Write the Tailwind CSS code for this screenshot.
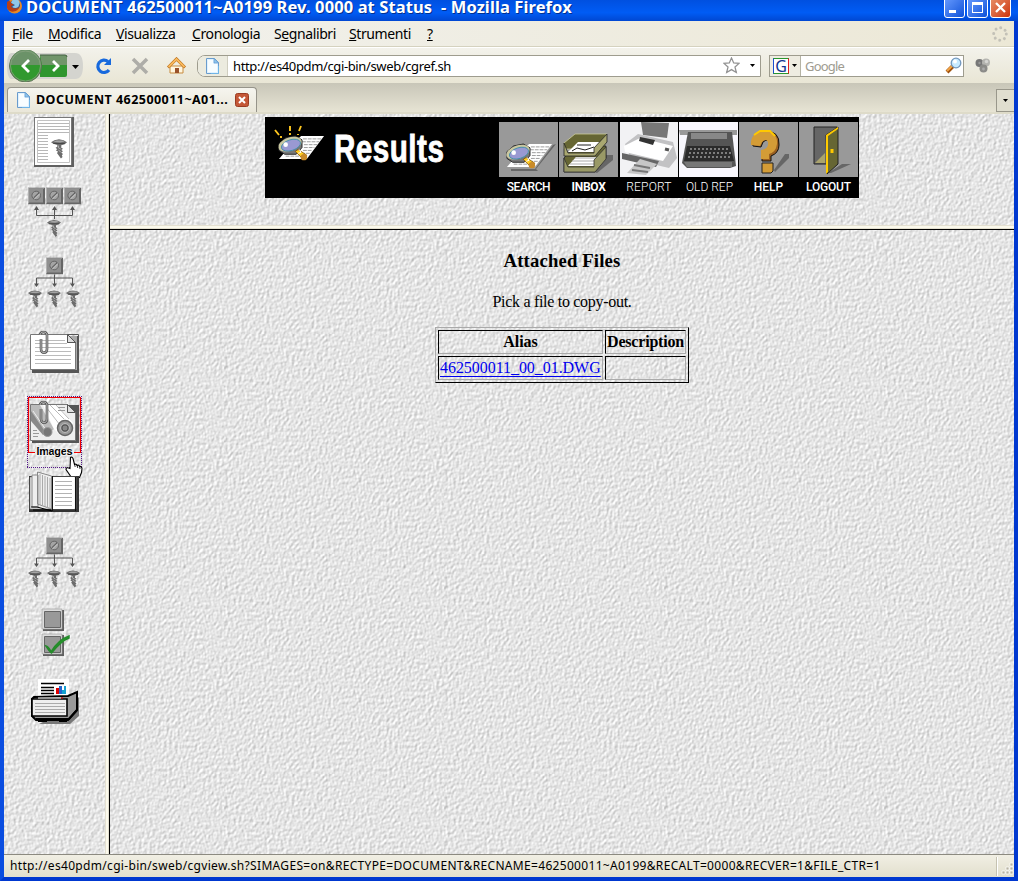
<!DOCTYPE html>
<html lang="it">
<head>
<meta charset="utf-8">
<title>DOCUMENT 462500011~A0199 Rev. 0000 at Status - Mozilla Firefox</title>
<script src="https://cdn.jsdelivr.net/npm/@tailwindcss/browser@4"></script>
</head>
<body class="w-[1018px] h-[881px] overflow-hidden font-['Noto_Sans',sans-serif]">
<!-- shared symbols -->
<svg class="absolute w-0 h-0">
  <defs>
    <filter id="paper" x="0" y="0" width="100%" height="100%" color-interpolation-filters="sRGB">
      <feTurbulence type="fractalNoise" baseFrequency="0.36 0.3" numOctaves="2" seed="8" stitchTiles="stitch" result="n"/>
      <feDiffuseLighting in="n" surfaceScale="0.42" diffuseConstant="1.17" lighting-color="#fff">
        <feDistantLight azimuth="220" elevation="50"/>
      </feDiffuseLighting>
    </filter>
    <pattern id="tex" width="220" height="220" patternUnits="userSpaceOnUse"><rect width="220" height="220" filter="url(#paper)"/></pattern>
    <symbol id="screw" viewBox="0 0 14 17" overflow="visible">
      <path d="M0 2.500 3 .8 7 0l4 .8 3 1.700-2 1.800-3 1v2l1.500 1-1.500 1 1.500 1.200-1.500 1 1.500 1.400-1 1 .6 1.600-1.400 1.400L5.200 12l1-1-2-1.300 1.300-1-1.500-1.200 1.500-1V5L2 4Z" fill="#6c6c6c"/>
      <path d="M2 2.200 5 1h5l2 1-4 .8Z" fill="#a4a4a4"/><path d="M6.500 5.500v2l2 1M6.500 9.500l2 1.500" stroke="#bbb" stroke-width=".8" fill="none"/>
      <path d="M2 3.700h10" stroke="#444" stroke-width=".8"/>
    </symbol>
    <symbol id="plate" viewBox="0 0 17 17">
      <path d="M0 0h17v17H0z" fill="#666"/><path d="M0 0h16v1H1v15H0z" fill="#b0b0b0"/><path d="M1 1h14v14H1z" fill="#909090"/>
      <circle cx="8.200" cy="8" r="4.300" fill="#a4a4a4" stroke="#666"/><path d="M5.500 10.500 11 5.200" stroke="#444" stroke-width="1"/><path d="M6.500 11.500 12 6.200" stroke="#ccc" stroke-width=".8"/>
    </symbol>
    <symbol id="tree" viewBox="0 0 52 52" overflow="visible">
      <use href="#plate" x="18" y="0" width="17" height="17"/>
      <path d="M26.500 17v11M8.500 28v-7.500h36v7.500" fill="none" stroke="#555"/>
      <path d="M6 26h5l-2.500 3.500ZM24 26h5l-2.500 3.500ZM42 26h5l-2.500 3.500Z" fill="#555"/>
      <use href="#screw" x="0" y="33" width="14" height="17"/><use href="#screw" x="19" y="33" width="14" height="17"/><use href="#screw" x="38" y="33" width="14" height="17"/>
    </symbol>
    <symbol id="clip" viewBox="0 0 10 25" overflow="visible">
      <path d="M1 4C1 0 8 0 8 4v14c0 5-6 5-6 0V8" fill="none" stroke="#555" stroke-width="2.600"/>
      <path d="M1 4C1 0 8 0 8 4v14c0 5-6 5-6 0V8" fill="none" stroke="#bbb" stroke-width="1"/>
    </symbol>
    <symbol id="page" viewBox="0 0 13 16">
      <path d="M.5.500h8l4 4v11H.5Z" fill="#e0f2ff" stroke="#6a9ccd"/><path d="M2 2h5v4h4v8H2Z" fill="#f8fdff"/><path d="M8 .500v4.500h4.500Z" fill="#8fc6ee" stroke="#5e99cf" stroke-width=".7"/><path d="M5 15.500h7.500V8" stroke="#70b5e6" fill="none"/>
    </symbol>
    <symbol id="lens" viewBox="0 0 50 30" overflow="visible">
      <path d="M24 2h24L30 26H1l6-7Z" fill="#fff"/>
      <path d="M26 5h19M25 8h18M27 11h14M27 14h11M26 17h10M24 20h10M8 23h20" stroke="#999" stroke-dasharray="4 1"/>
      <path d="M1 15v-5L8 4l10-2 7 4v8l-6 7H7l-6-4Z" fill="#777" stroke="#222"/>
      <ellipse cx="12.500" cy="10.500" rx="12.500" ry="7" fill="#c9c7a0" transform="rotate(-18 12.500 10.500)"/>
      <ellipse cx="13.500" cy="11.500" rx="10.300" ry="5.600" fill="#9999d2" stroke="#358ba8" stroke-width=".8" transform="rotate(-18 13.500 11.500)"/>
      <circle cx="8" cy="11" r="2.400" fill="#fff"/>
      <path d="m18 18 3-2 9 6-3 5Z" fill="#ffcc22" stroke="#7c4a00" stroke-width=".8"/><circle cx="27" cy="24" r="3.300" fill="#c98b2a"/><path d="m22 16 2 3-3 1" stroke="#fff" fill="none"/>
    </symbol>
  </defs>
</svg>

<div class="flex h-full flex-col bg-[#ece9d8]">
  <!-- title bar -->
  <header class="flex h-[21px] shrink-0 items-start justify-between overflow-hidden bg-linear-to-b from-[#0050e0] via-[#005cf5] via-60% to-[#0047d2] pl-[6px] pr-[7px]">
    <div class="flex h-full items-start">
      <svg class="mt-[-1px] h-[16px] w-[17px]" viewBox="0 0 17 16"><circle cx="8.500" cy="7" r="7.500" fill="#e88a24"/><circle cx="9" cy="6" r="5" fill="#21599d"/><path d="M7 0c4-1 8 2 6 6 0 3-4 4-7 2l3-2-4-2Z" fill="#8fc8ea"/><path d="M1 3c2-2 4-1 4 1l3 2-3 1c1 3 6 3 8 1-1 5-9 7-12 1Z" fill="#b73e17"/></svg>
      <h1 class="ml-[3px] mt-[-4px] whitespace-pre text-[16.500px] font-bold leading-[22px] tracking-[0.1px] text-white [text-shadow:1px_1px_0_#003090]">DOCUMENT 462500011~A0199 Rev. 0000 at Status  - Mozilla Firefox</h1>
    </div>
    <div class="mt-[-4px] flex gap-[2px]">
      <div class="h-[22px] w-[21px] rounded-[3px] border border-white bg-linear-to-br from-[#699cff] to-[#0850d8] pl-[4px] pt-[13px]"><div class="h-[3px] w-[7px] bg-white"></div></div>
      <div class="h-[22px] w-[21px] rounded-[3px] border border-white bg-linear-to-br from-[#699cff] to-[#0850d8] pl-[4px] pt-[5px]"><div class="h-[11px] w-[11px] border border-t-[3px] border-white"></div></div>
      <div class="h-[22px] w-[21px] rounded-[3px] border border-white bg-linear-to-br from-[#e79069] to-[#cc3000]"><svg viewBox="0 0 19 20"><path d="m5 6 9 9m0-9-9 9" stroke="#fff" stroke-width="2.300"/></svg></div>
    </div>
  </header>

  <div class="flex min-h-0 flex-1 flex-col border-x-4 border-b-4 border-[#0a4de0] border-b-[#0038d0] border-r-[#0038d0]">
    <!-- menu bar -->
    <nav class="flex h-[26px] shrink-0 items-center justify-between border-b border-[#d5d2bf] bg-linear-to-r from-[#f2f2ef] to-[#ece8d6] pl-[8px] pr-[6px]">
      <ul class="flex gap-[16px] text-[14px] leading-[20px] tracking-[-0.4px] text-black">
        <li class="w-[20px]"><u>F</u>ile</li><li class="w-[52px]"><u>M</u>odifica</li><li class="w-[60px]"><u>V</u>isualizza</li><li class="w-[66px]"><u>C</u>ronologia</li><li class="w-[59px]">S<u>e</u>gnalibri</li><li class="w-[62px]"><u>S</u>trumenti</li><li><u>?</u></li>
      </ul>
      <svg class="h-[16px] w-[16px]" viewBox="0 0 16 16"><circle cx="8" cy="8" r="6.300" fill="none" stroke="#c3c1b7" stroke-width="3" stroke-linecap="round" stroke-dasharray="0.010 4.938"/></svg>
    </nav>

    <!-- navigation bar -->
    <div class="flex h-[36px] shrink-0 items-center border-t border-white bg-linear-to-b from-[#f3f2eb] to-[#e9e6d5] pl-[3px]">
      <svg class="h-[32px] w-[76px]" viewBox="7 50 76 32">
        <path d="M11 53h64q8 0 8 13t-8 13H11Q7 78 7 66t4-13Z" fill="#d4d4cf"/>
        <path d="M40 55h25q2 0 2 2v18q0 2-2 2H40Z" fill="#2f962f"/><path d="M40 55h25q2 0 2 2v8H42Z" fill="#71956a"/><path d="M40 55h25q2 0 2 2" stroke="#456043" fill="none"/>
        <circle cx="25.500" cy="66" r="16" fill="#31992f" stroke="#64705c"/><path d="M10 65a15.500 15.500 0 0 1 31 0Z" fill="#6b9268"/><circle cx="25.500" cy="66" r="15" fill="none" stroke="#8aa582" stroke-width=".8"/>
        <path d="m29 60-6 6 6 6M53 61l5 5-5 5" fill="none" stroke="#fff" stroke-width="2.800"/><path d="M72 65h7l-3.500 4Z" fill="#000"/>
      </svg>
      <svg class="ml-[12px] h-[18px] w-[17px]" viewBox="0 0 17 18"><path d="M13 4.500A6.200 6.200 0 1 0 14 13" fill="none" stroke="#1769dd" stroke-width="3.200"/><path d="M16 1v7H9Z" fill="#1769dd"/></svg>
      <svg class="ml-[19px] h-[18px] w-[18px]" viewBox="0 0 18 18"><path d="m2 2 14 14M16 2 2 16" stroke="#aeada8" stroke-width="3.500"/></svg>
      <svg class="ml-[18px] h-[18px] w-[19px]" viewBox="0 0 19 18"><path d="M3 9h13v7H3Z" fill="#fff6df" stroke="#c78b3e"/><path d="M1 10.500 9.500 2l8.500 8.500" fill="none" stroke="#b96e1a" stroke-width="3"/><path d="M1.500 10 9.500 2l8 8" fill="none" stroke="#f9b95c" stroke-width="1.800"/><path d="M8 11h4v5H8Z" fill="#9a522a"/></svg>
      <div class="ml-[11px] flex h-[22px] w-[564px] items-center rounded-l-[8px] border border-[#9e9c8e] bg-white">
        <div class="flex h-full w-[30px] items-center justify-center rounded-l-[7px] border-r border-[#d0cec0] bg-[#ecebdf]"><svg class="h-[16px] w-[13px]"><use href="#page"/></svg></div>
        <span class="ml-[5px] flex-1 text-[13px] leading-[18px] tracking-[-0.37px]">http://es40pdm/cgi-bin/sweb/cgref.sh</span>
        <svg class="h-[17px] w-[17px]" viewBox="0 0 17 17"><path d="m8.500 1 2.200 5 5.300.4-4 3.600 1.300 5.500-4.800-2.900-4.800 2.900L5 10 1 6.400 6.300 6Z" fill="#fff" stroke="#929292" stroke-width="1.300"/></svg>
        <svg class="ml-[10px] mr-[5px] h-[3px] w-[5px]" viewBox="0 0 5 3"><path d="M0 0h5L2.500 3Z"/></svg>
      </div>
      <div class="ml-[8px] flex h-[22px] w-[195px] items-center border border-[#9e9c8e] bg-white">
        <div class="flex h-full w-[31px] items-center gap-[3px] border-r border-[#b5b3a4] bg-[#eeece1] pl-[3px]">
          <div class="flex h-[16px] w-[16px] items-center justify-center border border-b-[#28962e] border-l-[#1c4ed0] border-r-[#e02020] border-t-[#28962e] bg-white text-[16px] leading-none text-[#123590]">G</div>
          <svg class="h-[3px] w-[5px]" viewBox="0 0 5 3"><path d="M0 0h5L2.500 3Z"/></svg>
        </div>
        <span class="ml-[4px] flex-1 text-[13px] leading-[18px] tracking-[-0.8px] text-[#9e9b90]">Google</span>
        <svg class="mr-[1px] h-[17px] w-[17px]" viewBox="0 0 17 17"><path d="m8 9-6 6" stroke="#9d4f0b" stroke-width="4"/><path d="m8 8-6 6" stroke="#f2a447" stroke-width="2"/><circle cx="11" cy="6" r="4.800" fill="#c7eaff" stroke="#7397bd" stroke-width="1.300"/><circle cx="10" cy="4.500" r="2" fill="#fff"/></svg>
      </div>
      <svg class="ml-[11px] h-[15px] w-[16px]" viewBox="0 0 16 15"><circle cx="4.500" cy="5" r="4" fill="#777"/><circle cx="11" cy="4.500" r="4" fill="#b4b4b0"/><circle cx="8.500" cy="10.500" r="4" fill="#8b8b88"/><circle cx="4.500" cy="5" r="1.200" fill="#999"/><circle cx="11.500" cy="3.500" r="1.700" fill="#d5d5d2"/><circle cx="8.500" cy="11" r="1.400" fill="#aaa"/></svg>
    </div>

    <!-- tab strip -->
    <div class="flex h-[31px] shrink-0 items-end justify-between border-b-2 border-[#dedbc9] bg-linear-to-b from-[#c8c6b8] to-[#e7e4d4]">
      <div class="ml-[3px] flex h-[25px] w-[250px] items-center rounded-t-[4px] border border-b-0 border-[#96948a] bg-linear-to-b from-[#f6f5ef] to-[#eae7d9] pl-[9px]">
        <svg class="h-[16px] w-[13px]"><use href="#page"/></svg>
        <span class="ml-[6px] w-[199px] whitespace-nowrap text-[12.500px] font-bold leading-[18px] tracking-[0.45px]">DOCUMENT 462500011~A01...</span>
        <svg class="h-[14px] w-[14px] shrink-0" viewBox="0 0 14 14"><rect x=".5" y=".5" width="13" height="13" rx="2" fill="#c45736" stroke="#9a3c23"/><path d="m4 4 6 6m0-6-6 6" stroke="#fff" stroke-width="2"/></svg>
      </div>
      <div class="flex h-[23px] w-[18px] items-center justify-center self-end border border-r-0 border-[#99978b] bg-[#e0decf]"><svg class="h-[3px] w-[5px]" viewBox="0 0 5 3"><path d="M0 0h5L2.500 3Z"/></svg></div>
    </div>

    <!-- frameset -->
    <main class="relative isolate flex min-h-0 flex-1">
      <svg class="absolute inset-0 -z-10 h-full w-full"><rect width="100%" height="100%" fill="url(#tex)"/></svg>
      <aside class="flex w-[101px] shrink-0 flex-col">
        <svg class="h-[69px] w-[100px] shrink-0" viewBox="4 114 100 69">
          <path d="M34 117h40v50H34z" fill="#606060"/><path d="M34 117h38v48H34z" fill="#777"/><path d="M35 118h36v47H35z" fill="#fff"/>
          <path d="M37.500 120.500h32v42h-32z" fill="none" stroke="#c3c3c3"/><path d="M38 123.500h31M38 126.500h31M38 129.500h31M38 132.500h31M38 135.500h10M38 138.500h10M38 141.500h10M38 144.500h10M38 147.500h10M38 150.500h10M38 153.500h10M38 156.500h10M38 159.500h10" stroke="#b8b8b8"/>
          <use href="#screw" x="51" y="139" width="16" height="20"/>
        </svg>
        <svg class="h-[70px] w-[100px] shrink-0" viewBox="4 183 100 70">
          <use href="#plate" x="28" y="187.500" width="17" height="17"/><use href="#plate" x="46" y="187.500" width="17" height="17"/><use href="#plate" x="64" y="187.500" width="17" height="17"/>
          <path d="M36.500 208v7.500h36V208M54.500 208v11" fill="none" stroke="#555"/><path d="M34 210h5l-2.500-4ZM52 210h5l-2.500-4ZM70 210h5l-2.500-4Z" fill="#555"/>
          <use href="#screw" x="47" y="220" width="14" height="17"/>
        </svg>
        <svg class="h-[70px] w-[100px] shrink-0" viewBox="4 253 100 70"><use href="#tree" x="28" y="257.500" width="52" height="52"/></svg>
        <svg class="h-[70px] w-[100px] shrink-0" viewBox="4 323 100 70">
          <path d="M32 336h47v37H32z" fill="#555"/><path d="M33 336h44v34H33z" fill="#aaa"/><path d="M30.500 334.500h37l8 8v27h-45z" fill="#fff" stroke="#777"/><path d="M67.500 334.500v8h8M67.500 334.500h11v2" fill="none" stroke="#555"/><path d="m67.500 334.500 8 8h-8Z" fill="#ddd" stroke="#555"/>
          <path d="M35 340.500h30M35 343.500h32M35 347.500h36M35 351.500h36M35 355.500h36M35 359.500h36M35 363.500h36" stroke="#bbb"/>
          <use href="#clip" x="39" y="331" width="10" height="25"/>
        </svg>
        <svg class="h-[76px] w-[100px] shrink-0 overflow-visible" viewBox="4 393 100 76">
          <path d="M32 405h47v38H32z" fill="#555"/><path d="M30.500 404.500h37l8 8v28h-45z" fill="#eee" stroke="#777"/>
          <path d="M31 405h9l14 24-9 7-14-19Z" fill="#bbb"/><path d="m31 411 15 22-3 2-12-14Z" fill="#888"/><path d="M43 405h14l16 18-12 13-7-7Z" fill="#fff"/><path d="m50 405 14 14m-18-12 14 18m-4-20 13 14" stroke="#bbb"/><path d="m33 411 13 19" stroke="#eee"/>
          <circle cx="47.500" cy="432" r="4.500" fill="#777" stroke="#999"/><circle cx="65" cy="428" r="7.500" fill="#999" stroke="#666" stroke-width="1.500"/><circle cx="65" cy="428" r="4.500" fill="#777" stroke="#bbb" stroke-width="1"/><circle cx="65" cy="428" r="3" fill="#888" stroke="#555"/>
          <path d="M67.500 404.500v8h8l-8-8" fill="#ddd" stroke="#555"/><path d="M58 407.500h7M58 410.500h7M33 430.500h4M33 433.500h6M33 436.500h5" stroke="#999"/>
          <use href="#clip" x="39" y="401" width="10" height="25"/>
          <path d="M35 452.500h-6.500v-55h52v55h-6.500" fill="none" stroke="#f00000" stroke-width="1.200"/>
          <path d="M27.500 396v72M81.500 396v72M27 396.500h55M27 467.500h55" fill="none" stroke="#551a8b" stroke-dasharray="1 1" shape-rendering="crispEdges"/>
          <text x="54.500" y="455" text-anchor="middle" font-family="Liberation Sans,sans-serif" font-size="11" font-weight="700" textLength="36" stroke="#f2f2f2" stroke-width="2" paint-order="stroke">Images</text>
          <path d="M70.500 457.500q1.500-1 2.500 1l1.500 6q2-1 2.500 1 2-1 2.500 1 2-.5 2.500 2l-.5 4-2 5h-8l-5.500-8q0-3 4-1Z" fill="#fff" stroke="#000" stroke-width="1.100"/><path d="m74.500 464 .7 3m2-2 .5 3m2-2 .3 3" stroke="#000" stroke-width=".8"/>
        </svg>
        <svg class="h-[60px] w-[100px] shrink-0" viewBox="4 469 100 60">
          <path d="M29 476h50v36H29z" fill="#333"/><path d="M30 477h46v32H30z" fill="#eee" stroke="#777" stroke-width=".6"/><path d="M52.500 477h22v32h-22z" fill="#fff"/><path d="M52.500 476v35M75.500 477v34" stroke="#111"/>
          <path d="M55 481.500h17M55 485.500h17M55 489.500h17M55 493.500h17M55 497.500h17M55 501.500h17M55 505.500h17" stroke="#b3b3b3"/>
          <path d="M32 475h6v32h-6zM37.500 472l14 4v33l-14-5Z" fill="#eee" stroke="#888"/><path d="M40 474v31M42.500 475v31M45 476v31M47.500 477v31M50 478v31" stroke="#aaa"/><path d="M31 507h6l15 4M33 510h18" stroke="#000" fill="none"/>
        </svg>
        <svg class="h-[70px] w-[100px] shrink-0" viewBox="4 529 100 70"><use href="#tree" x="28" y="537.500" width="52" height="52"/></svg>
        <svg class="h-[70px] w-[100px] shrink-0" viewBox="4 599 100 70">
          <path d="M43 610h21v21H43zM43 635h21v21H43z" fill="#606060"/><path d="M42 609h20v20H42zM42 634h20v20H42z" fill="#ddd" stroke="#999" stroke-width=".6"/><path d="M44.500 611.500h16v16h-16zM44.500 636.500h16v16h-16z" fill="#999" stroke="#666"/>
          <path d="M46 646q3 1 5 6 7-12 18-16v2Q61 641 51.500 653 49 651 46 646Z" fill="#239d2a" stroke="#258b2b" stroke-width="1.500"/>
        </svg>
        <svg class="h-[70px] w-[100px] shrink-0" viewBox="4 669 100 70">
          <path d="m39 724 8-4 25-4 5-20 2 2v18l-9 8Z" fill="#777"/>
          <path d="M38 679h31v20H38z" fill="#fff"/><path d="M41 683.500h23M41 687.500h13M41 690.500h13M41 693.500h13" stroke="#000" stroke-width="1.400"/><path d="M56 688h3v6h-3z" fill="#d00"/><path d="M59 686h3v8h-3z" fill="#26c"/><path d="M62 690h2v4h-2zM64 686h2v8h-2z" fill="#15a0d0"/>
          <path d="m34 697 34-1 9-4v18l-9 10H36l-4-4v-17Z" fill="#999" stroke="#000" stroke-width="2"/><path d="M32 699h35v17H32z" fill="#eee" stroke="#000" stroke-width="1.600"/><path d="M35 703.500h30M35 706.500h30M35 709.500h30M35 712.500h30" stroke="#aaa"/><path d="M38 698h23" stroke="#fff"/><path d="M61 698h2" stroke="#e00"/><path d="M36 719h33l8-9M38 721h9M59 721h8" stroke="#000" stroke-width="2" fill="none"/>
        </svg>
      </aside>
      <div class="w-[4px] border-x border-[#e4e0d0] bg-[#fbf9ec]"></div>
      <div class="w-px bg-black"></div>

      <div class="flex min-w-0 flex-1 flex-col">
        <section class="h-[111px] shrink-0 pl-[155px] pt-[3px]">
          <div class="flex h-[81px] w-[594px] bg-black pt-[5px]">
            <div class="flex w-[234px] items-start">
              <svg class="ml-[9px] mt-[2px] h-[42px] w-[52px]" viewBox="274 124 52 42"><path d="m275 130 4 5m2 1v2M290 126v5m0 2v2M301 126l-2 5m-1 3v1" stroke="#ffc71f" stroke-width="1.900"/><use href="#lens" x="278" y="134" width="48" height="29"/></svg>
              <h2 class="ml-[8px] mt-[2px] origin-left scale-x-[0.78] font-['Liberation_Sans',sans-serif] text-[38px] font-bold leading-[50px] tracking-[0.6px] text-white [-webkit-text-stroke:0.8px_white]">Results</h2>
            </div>
            <div class="flex gap-[1px] font-['Roboto',sans-serif] text-[12px] leading-[21px] text-white">
              <div class="flex w-[59px] flex-col items-center"><svg class="h-[55px] w-[59px] shrink-0 bg-[#999]" viewBox="0 0 59 55"><path d="M12 47h24l18-24 3-1-20 25 2 2H12Z" fill="#666"/><use href="#lens" x="7" y="20" width="48" height="29"/></svg><b class="font-medium tracking-[-0.4px]">SEARCH</b></div>
              <div class="flex w-[59px] flex-col items-center"><svg class="h-[55px] w-[59px] shrink-0 bg-[#999]" viewBox="0 0 59 55"><path d="m35 50 8-17h11v5L38 51Z" fill="#666"/>
                <path d="M5 36 16 24h31v12L36 50H5Z" fill="#666633" stroke="#222" stroke-width=".8"/><path d="m9 44 8-9h27l-9 9Z" fill="#fff"/><path d="M11 42h24M13 39h25M16 36h25" stroke="#aaa"/><path d="M5 36v14h31l11-13V25L35 38v7H9Z" fill="#999966" stroke="#333" stroke-width=".8"/>
                <path d="M5 21 16 12h32L36 27H5Z" fill="#666633" stroke="#cccc99" stroke-width=".8"/><path d="m9 30 10-10h26l-9 10Z" fill="#fff"/><path d="m13 29 5-3 8 2 9-3m-17-2h14" stroke="#222" fill="none"/><path d="M5 21v13h31l12-14v-8L35 26v5H9Z" fill="#aaa871" stroke="#222" stroke-width=".8"/></svg><b class="font-bold tracking-[-0.3px]">INBOX</b></div>
              <div class="flex w-[59px] flex-col items-center pl-px"><svg class="h-[55px] w-[58px] shrink-0 bg-[#f2f2f4]" viewBox="0 0 58 55"><path d="m21 0 28 1-2 15-24-3Z" fill="#777"/><path d="m5 22 13-10 35 8 4 16-8 10-38-9Z" fill="#c2c2c4"/><path d="m4 24 16-8 33 8-10 15-38-9Z" fill="#fff"/><path d="m20 15 15 3-2 5-14-4Z" fill="#333"/><path d="m2 31 37 8-3 6-34-8Z" fill="#666"/><path d="m20 37 17 5-11 11-19-2Z" fill="#c7c7c7"/><path d="m14 43 16 3m-18 2 16 2" stroke="#777" stroke-width="2"/><path d="m45 27 4 1" stroke="#555" stroke-width="3"/></svg><span class="font-light tracking-[0.2px]">REPORT</span></div>
              <div class="flex w-[59px] flex-col items-center"><svg class="h-[55px] w-[59px] shrink-0 bg-[#f8f7fd]" viewBox="0 0 59 55"><path d="M0 8h58v5H1Z" fill="#999"/><path d="M9 10h44l4 34-6 2H8l-5-5Z" fill="#555"/><path d="M12 11h36v6H12Z" fill="#888"/><path d="M8 24h43l4 15H5Z" fill="#2b2b2b"/><path d="M11 27h39M10 31h42M9 35h43" stroke="#999" stroke-width="1.300" stroke-dasharray="2 2"/><path d="M5 40h48v5H8Z" fill="#777"/></svg><span class="pl-[2px] font-light">OLD REP</span></div>
              <div class="flex w-[59px] flex-col items-center"><svg class="h-[55px] w-[59px] shrink-0 bg-[#999]" viewBox="0 0 59 55"><path d="m35 48 11-16h4v4L36 50Z" fill="#666"/><path d="M14 24q-3-12 12-15 15 0 14 14 0 8-8 11v5h-9V29q9-1 8-8-2-5-7-1l-2 5Z" fill="#9a5f20" stroke="#111"/><path d="M12 23q-1-12 12-14 15 0 14 13-1 8-8 10v5h-8V28q8-1 7-8-2-4-6 0l-2 4Z" fill="#d49c36"/><path d="m15 13 6-4h10l5 5" stroke="#ffc900" stroke-width="2" fill="none"/><path d="M23 41h11v8l-2 2h-9Z" fill="#d49c36" stroke="#222"/></svg><b class="font-medium">HELP</b></div>
              <div class="flex w-[59px] flex-col items-center"><svg class="h-[55px] w-[59px] shrink-0 bg-[#999]" viewBox="0 0 59 55"><path d="m29 51 14-9h9l-20 9Z" fill="#666"/><path d="M15 5h23v37H15Z" fill="#666" stroke="#222"/><path d="m16 41 10-10v10Z" fill="#aaa36d"/><path d="m27 13 12-8v37L28 52Z" fill="#666633" stroke="#222"/><path d="m27 13 12-8v2l-10 7v36l-2 2Z" fill="#ffca00"/><path d="M33 27v4" stroke="#ffc800" stroke-width="3"/></svg><b class="font-medium tracking-[-0.2px]">LOGOUT</b></div>
            </div>
          </div>
        </section>
        <div class="h-[4px] border-y border-[#e4e0d0] bg-[#fbf9ec]"></div>
        <div class="h-px bg-black"></div>
        <section class="flex flex-1 flex-col items-center pt-[20px] font-['Liberation_Serif',serif] text-black">
          <h3 class="text-[18.700px] font-bold leading-[22px] tracking-[0.15px]">Attached Files</h3>
          <p class="mt-[20px] text-[16px] leading-[20px] tracking-[-0.3px]">Pick a file to copy-out.</p>
          <table class="mt-[15px] w-[254px] border-separate border-spacing-[2px] border border-b-black border-l-[#aaa] border-r-black border-t-[#aaa] text-[16px] leading-[20px]">
            <tr class="h-[24px]"><th class="w-[165px] border border-b-[#aaa] border-l-black border-r-[#aaa] border-t-black p-px">Alias</th><th class="border border-b-[#aaa] border-l-black border-r-[#aaa] border-t-black p-px tracking-[-0.2px]">Description</th></tr>
            <tr class="h-[24px]"><td class="border border-b-[#aaa] border-l-black border-r-[#aaa] border-t-black p-px"><a class="whitespace-nowrap tracking-[-0.05px] text-[#0000ee] underline underline-offset-[3px]">462500011_00_01.DWG</a></td><td class="border border-b-[#aaa] border-l-black border-r-[#aaa] border-t-black p-px"></td></tr>
          </table>
        </section>
      </div>
    </main>

    <!-- status bar -->
    <footer class="flex h-[23px] shrink-0 items-center border-t border-[#8c8a80] bg-linear-to-b from-[#f1efe4] to-[#e2dfcd] pl-[6px]">
      <span class="flex-1 whitespace-nowrap text-[12px] leading-[18px] tracking-[0.32px]">http://es40pdm/cgi-bin/sweb/cgview.sh?SIMAGES=on&amp;RECTYPE=DOCUMENT&amp;RECNAME=462500011~A0199&amp;RECALT=0000&amp;RECVER=1&amp;FILE_CTR=1</span>
      <div class="h-[19px] w-[2px] border-l border-[#c5c2b1] bg-white"></div>
      <svg class="ml-[3px] h-[18px] w-[13px]" viewBox="0 0 13 18"><path d="M9 6h3v3H9ZM5 10h3v3H5ZM9 10h3v3H9ZM1 14h3v3H1ZM5 14h3v3H5ZM9 14h3v3H9Z" fill="#b8b4a2" stroke="#fff" stroke-width=".7"/></svg>
    </footer>
  </div>
</div>
</body>
</html>
